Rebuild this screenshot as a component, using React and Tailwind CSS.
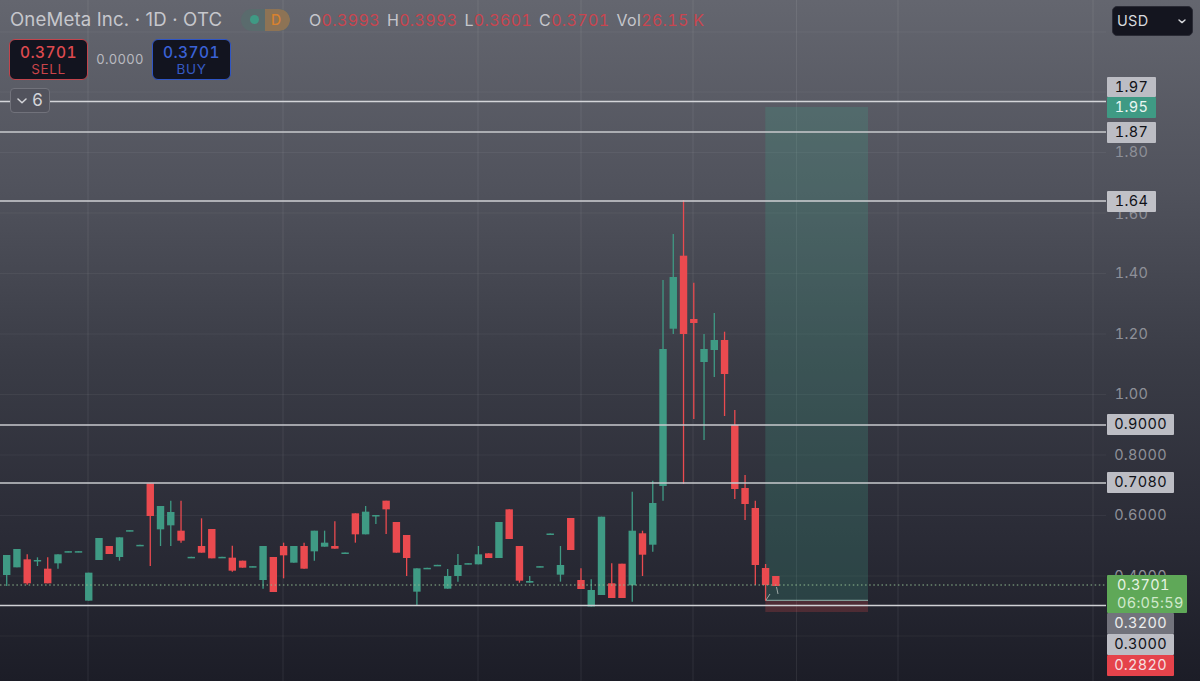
import React from "react";

const G = "#3f9a84";
const R = "#ea4a4f";
const X0 = 6.7;
const DX = 10.255;
// [color, wickTop, bodyTop, bodyBottom, wickBottom] page y
const z = (v) => 470 + v / 3;
const c = (col, wt, bt, bb, wb) => [col, wt == null ? z(bt) : z(wt), z(bt), z(bb), wb == null ? z(bb) : z(wb)];
const dash = (y) => c("g", null, y - 1.5, y + 1.5, null);
const candles = [
  c("g", null, 255, 315, 348), c("g", null, 237, 292), c("r", 253, 268, 340, 344), c("g", 262, 270, 273, 288),
  c("r", 262, 296, 340), c("g", null, 253, 280, 296), dash(245), dash(245),
  c("g", null, 308, 392), c("g", null, 204, 270), c("r", null, 228, 252), c("g", null, 202, 261, 272),
  dash(182), dash(226), c("r", null, 40, 138, 288), c("g", null, 108, 178, 228),
  c("g", 92, 126, 166, 228), c("r", 92, 182, 212, 218), dash(262), c("r", 145, 228, 248),
  c("r", null, 177, 265), dash(262), c("r", 227, 263, 302, 305), c("r", null, 272, 293),
  dash(290), c("g", null, 228, 330, 356), c("r", null, 261, 366), c("r", 218, 228, 256, 325),
  c("g", null, 228, 278), c("r", 218, 228, 296), c("g", null, 182, 244, 272), c("g", 182, 218, 230),
  c("r", 154, 228, 236), dash(249), c("r", null, 130, 193, 218), c("g", 108, 125, 193),
  c("g", 135, 135, 137.5, 162), c("r", null, 92, 118, 192), c("r", null, 156, 248), c("r", null, 195, 264, 318),
  c("g", null, 295, 365, 408), dash(295), dash(286), c("g", 297, 318, 356),
  c("g", 252, 285, 318, 335), dash(281), c("g", 228, 253, 283), c("r", null, 250, 264),
  c("g", null, 156, 264), c("r", null, 118, 207), c("r", null, 228, 332, 338), c("g", 318, 333, 338),
  dash(290), dash(192), c("g", 228, 285, 314, 335), c("r", null, 144, 240),
  c("r", 295, 330, 357),
  ["g", 579.3, 590, 606.5, 606.5], ["g", 516.7, 516.7, 595, 595], ["r", 563.3, 583.3, 598, 598], ["r", 563.7, 563.7, 598, 598],
  ["g", 491.7, 530.7, 585.3, 601.7], ["r", 530.7, 533.3, 554.7, 576], ["g", 480.7, 503, 544.7, 551.7],
  ["g", 280, 349, 486, 500.7], ["g", 234, 277, 328.7, 334], ["r", 200, 255.7, 334, 484], ["r", 282.7, 319, 323, 419],
  ["g", 334, 349, 362, 440], ["g", 313, 340, 350, 377], ["r", 331.7, 340, 374, 416], ["r", 410, 425, 489, 499],
  ["r", 475, 488, 504, 520], ["r", 500.7, 508, 565, 585], ["r", 564, 568, 585, 600.7], ["r", 576, 576, 586, 586],
];

const hGrid = [32, 92, 152.5, 213, 273.5, 334, 394.5, 455, 515.5, 576, 636];
const vGrid = [88, 283, 478, 581, 693, 796.5, 898, 1093];
const levels = [[101.5, 1.5, "#d4d5d9"], [132, 1.5, "#c9cace"], [201, 1.5, "#cfd0d4"], [425, 1.5, "#c9cace"], [483, 1.5, "#c9cace"], [605.5, 1.5, "#d0d1d5"]];

function Chart() {
  return (
    <svg className="absolute inset-0" width="1200" height="681" viewBox="0 0 1200 681">
      {hGrid.map((y) => (
        <line key={y} x1="0" x2="1106" y1={y} y2={y} stroke="#ffffff" strokeOpacity="0.05" />
      ))}
      {vGrid.map((x) => (
        <line key={x} x1={x} x2={x} y1="0" y2="681" stroke="#ffffff" strokeOpacity="0.08" />
      ))}
      <rect x="765.3" y="107" width="102.7" height="493" fill="#3f9a84" fillOpacity="0.25" />
      <rect x="765.3" y="600" width="102.7" height="12" fill="#ea4a4f" fillOpacity="0.22" />
      <line x1="765.3" x2="868" y1="600.3" y2="600.3" stroke="#8fb8b0" strokeWidth="1" />
      {candles.map(([col, wt, bt, bb, wb], i) => {
        const x = X0 + DX * i;
        const color = col === "g" ? G : R;
        return (
          <g key={i}>
            <line x1={x} x2={x} y1={wt} y2={wb} stroke={color} strokeWidth="1.3" />
            <rect x={x - 3.7} y={bt} width="7.4" height={Math.max(bb - bt, 1.5)} fill={color} />
          </g>
        );
      })}
      <path d="M766 600 L770 594 M776.5 587 L778 594" stroke="#a9b3b1" strokeWidth="0.9" fill="none" />
      {levels.map(([y, w, col]) => (
        <line key={y} x1="0" x2="1106" y1={y} y2={y} stroke={col} strokeWidth={w} />
      ))}
      <line x1="0" x2="1106" y1="585" y2="585" stroke="#8fb98f" strokeWidth="1" strokeDasharray="1.5 2.6" />
    </svg>
  );
}

const ticks = [
  ["1.80", 152.5], ["1.60", 214], ["1.40", 273.5], ["1.20", 334], ["1.00", 394.5],
  ["0.8000", 455], ["0.6000", 515.5], ["0.4000", 576],
];
const tags = [
  ["1.97", 76.5, 20.5, 49, "bg-[#bcbdc4] text-[#101218]"],
  ["1.95", 97, 21, 49, "bg-[#3f9a84] text-[#e9f5f1]"],
  ["1.87", 122, 20.5, 49, "bg-[#bcbdc4] text-[#101218]"],
  ["1.64", 191, 20.5, 49, "bg-[#c0c1c7] text-[#101218]"],
  ["0.9000", 414, 21, 67, "bg-[#bcbdc4] text-[#101218]"],
  ["0.7080", 472, 21, 67, "bg-[#bcbdc4] text-[#101218]"],
  ["0.3200", 613, 20.5, 67, "bg-[#72737c] text-[#eceded]"],
  ["0.3000", 633.5, 21, 67, "bg-[#bcbdc4] text-[#101218]"],
  ["0.2820", 655, 20.5, 67, "bg-[#e5434b] text-[#f6dfe0]"],
];

function PriceAxis() {
  return (
    <div className="absolute inset-y-0 left-[1107px] w-[93px] text-[14.5px] tabular-nums leading-none tracking-[0.3px]">
      {ticks.map(([t, y]) => (
        <div key={t} className="absolute flex h-5 items-center justify-center text-[#8e9098]" style={{ top: y - 10, width: t.length === 4 ? 49 : 67 }}>
          {t}
        </div>
      ))}
      {tags.map(([t, y, h, w, cls]) => (
        <div key={t} className={"absolute flex items-center justify-center rounded-[1px] " + cls} style={{ top: y, height: h, width: w }}>
          {t}
        </div>
      ))}
      <div className="absolute top-[575px] flex h-[38px] w-[80px] flex-col justify-center gap-[4px] rounded-[1px] bg-[#5fa858] pl-[10px] text-[#e6f3e3]">
        <span>0.3701</span>
        <span className="text-[#cfe8cb]">06:05:59</span>
      </div>
    </div>
  );
}

function PriceButton({ price, label, border, text }) {
  return (
    <div className={"flex h-[41px] w-[79px] flex-col items-center justify-center rounded-[6px] border-[1.5px] bg-[#12141f] " + border + " " + text}>
      <span className="text-[15.5px] font-medium tabular-nums leading-[19px] tracking-[0.4px]">{price}</span>
      <span className="text-[13.5px] leading-[15px] tracking-[0.6px] opacity-90">{label}</span>
    </div>
  );
}

function Legend() {
  return (
    <div className="absolute left-0 top-0 flex flex-col">
      <div className="flex h-[39px] items-center pl-[10px]">
        <span className="w-[231px] text-[18.6px] tracking-[0.15px] text-[#c6c7cc]">OneMeta Inc. · 1D · OTC</span>
        <div className="flex h-[22px] w-[49px] overflow-hidden rounded-full bg-[#5a6b6d]">
          <div className="flex w-[24px] items-center justify-center">
            <span className="ml-[2px] h-[9px] w-[9px] rounded-full bg-[#3f9a84]" />
          </div>
          <div className="flex w-[25px] items-center justify-center rounded-r-full bg-[#8d7355] pr-[3px] text-[14px] font-medium text-[#d9822f]">D</div>
        </div>
        <div className="ml-[19px] flex gap-[7px] text-[16px] tabular-nums tracking-[0.35px] text-[#c9454f]">
          {[["O", "0.3993"], ["H", "0.3993"], ["L", "0.3601"], ["C", "0.3701"], ["Vol", "26.15 K"]].map(([k, v]) => (
            <span key={k}>
              <span className="text-[#c6c7cc]">{k}</span>
              {v}
            </span>
          ))}
        </div>
      </div>
      <div className="flex items-center pl-[9px]">
        <PriceButton price="0.3701" label="SELL" border="border-[#c2444c]" text="text-[#dd4a4f]" />
        <span className="w-[64px] text-center text-[13px] tabular-nums tracking-[0.3px] text-[#b9bac0]">0.0000</span>
        <PriceButton price="0.3701" label="BUY" border="border-[#2f55c4]" text="text-[#3a62d6]" />
      </div>
      <div className="ml-[10px] mt-[8px] flex h-[25px] w-[40px] items-center justify-center gap-[5px] rounded-[4px] border border-[#71727b] bg-[#52535d] text-[17px] text-[#d3d4d8]">
        <svg width="10" height="6" viewBox="0 0 10 6" fill="none" stroke="#d3d4d8" strokeWidth="1.5" strokeLinecap="round" strokeLinejoin="round">
          <path d="M1 1l4 3.8L9 1" />
        </svg>
        6
      </div>
    </div>
  );
}

export default function App() {
  return (
    <div
      className="relative h-[681px] w-[1200px] overflow-hidden bg-[linear-gradient(to_bottom,#64666f_0%,#50525c_28%,#3a3c46_53%,#2a2b36_79%,#1c1d27_100%)]"
      style={{ fontFamily: "Inter, 'Liberation Sans', sans-serif" }}
    >
      <Chart />
      <PriceAxis />
      <Legend />
      <div className="absolute right-[7px] top-[6px] flex h-[30px] w-[81px] items-center justify-between rounded-[5px] border border-[#2a2b35] bg-[#14151f] pl-[4px] pr-[6px] text-[14.5px] tracking-[0.3px] text-[#d8d9dd]">
        USD
        <svg width="8" height="5" viewBox="0 0 8 5" fill="none" stroke="#d8d9dd" strokeWidth="1.4" strokeLinecap="round" strokeLinejoin="round">
          <path d="M1 1l3 2.6L7 1" />
        </svg>
      </div>
    </div>
  );
}
